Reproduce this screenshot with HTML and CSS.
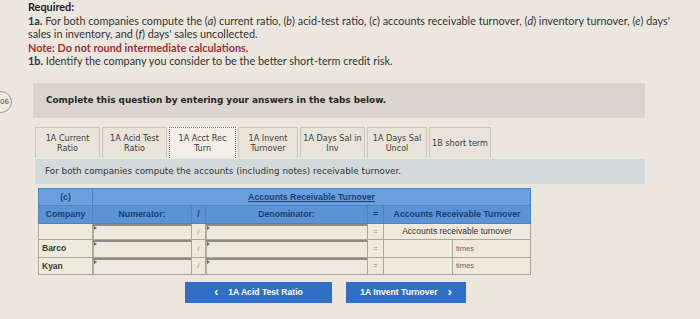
FILE: index.html
```html
<!DOCTYPE html>
<html>
<head>
<meta charset="utf-8">
<link rel="stylesheet" href="styles.css">
</head>
<body>
<div class="badge">06</div>
<div class="req">
  <div class="b">Required:</div>
  <div><b>1a.</b> For both companies compute the (<i>a</i>) current ratio, (<i>b</i>) acid-test ratio, (<i>c</i>) accounts receivable turnover, (<i>d</i>) inventory turnover, (<i>e</i>) days'</div>
  <div>sales in inventory, and (<i>f</i>) days' sales uncollected.</div>
  <div class="note">Note: Do not round intermediate calculations.</div>
  <div><b>1b.</b> Identify the company you consider to be the better short-term credit risk.</div>
</div>
<div class="main">
  <div class="bar">Complete this question by entering your answers in the tabs below.</div>
  <div class="tabs">
    <div class="tab w65">1A Current<br>Ratio</div>
    <div class="tab w65">1A Acid Test<br>Ratio</div>
    <div class="tab active w67">1A Acct Rec<br>Turn</div>
    <div class="tab w60">1A Invent<br>Turnover</div>
    <div class="tab w65">1A Days Sal in<br>Inv</div>
    <div class="tab w60">1A Days Sal<br>Uncol</div>
    <div class="tab w62">1B short term</div>
  </div>
  <div class="info">For both companies compute the accounts (including notes) receivable turnover.</div>
  <table class="grid">
    <colgroup>
      <col class="c1"><col class="c2"><col class="c3"><col class="c4"><col class="c5"><col class="c6"><col class="c7">
    </colgroup>
    <tr class="h1">
      <th>(c)</th>
      <th colspan="6"><span class="ul">Accounts Receivable Turnover</span></th>
    </tr>
    <tr class="h2">
      <th>Company</th>
      <th>Numerator:</th>
      <th>/</th>
      <th>Denominator:</th>
      <th>=</th>
      <th colspan="2">Accounts Receivable Turnover</th>
    </tr>
    <tr class="r1">
      <td></td>
      <td class="in"><span class="mk"></span></td>
      <td class="op">/</td>
      <td class="in"><span class="mk"></span></td>
      <td class="op">=</td>
      <td colspan="2" class="lbl">Accounts receivable turnover</td>
    </tr>
    <tr class="r2">
      <td class="co">Barco</td>
      <td class="in"><span class="mk"></span></td>
      <td class="op">/</td>
      <td class="in"><span class="mk"></span></td>
      <td class="op">=</td>
      <td class="val"></td>
      <td class="unit">times</td>
    </tr>
    <tr class="r3">
      <td class="co">Kyan</td>
      <td class="in"><span class="mk"></span></td>
      <td class="op">/</td>
      <td class="in"><span class="mk"></span></td>
      <td class="op">=</td>
      <td class="val"></td>
      <td class="unit">times</td>
    </tr>
  </table>
  <div class="nav">
    <div class="btn prev"><span class="chev">&lsaquo;</span>1A Acid Test Ratio</div>
    <div class="btn next">1A Invent Turnover<span class="chev r">&rsaquo;</span></div>
  </div>
</div>
</body>
</html>
```
FILE: styles.css
```css
html, body {
  margin: 0;
  padding: 0;
}
body {
  background: #ece7de;
  width: 700px;
  height: 319px;
  overflow: hidden;
  position: relative;
  font-family: Lato, "Open Sans", sans-serif;
  color: #2b2b2b;
}
.badge {
  position: absolute;
  left: -10px;
  top: 91px;
  width: 22px;
  height: 22px;
  border: 1px solid #9a968f;
  border-radius: 50%;
  background: #efebe4;
  font: 7px "DejaVu Sans", sans-serif;
  color: #555;
  display: flex;
  align-items: center;
  justify-content: flex-end;
  padding-right: 2px;
  box-sizing: border-box;
}
.req {
  padding: 0 0 0 28px;
  font-size: 10.85px;
  line-height: 13.5px;
  color: #333;
}
.req .b, .req b {
  font-weight: 700;
}
.req .b { color: #222; }
.note {
  color: #a33038;
  font-weight: 700;
}
.main {
  margin: 15px 0 0 33px;
  width: 612px;
}
.bar {
  height: 35px;
  background: #d9d5ce;
  display: flex;
  align-items: center;
  padding-left: 13px;
  font: bold 8.9px "DejaVu Sans", sans-serif;
  color: #262626;
}
.tabs {
  display: flex;
  gap: 2px;
  margin: 9px 0 0 2px;
  height: 31px;
}
.tab {
  box-sizing: border-box;
  height: 31px;
  background: #e9e4da;
  border: 1px solid #cbc5bb;
  border-bottom: none;
  display: flex;
  align-items: center;
  justify-content: center;
  text-align: center;
  font: 8.1px/10px "DejaVu Sans", sans-serif;
  color: #3a3a3a;
  white-space: nowrap;
}
.tab.active {
  background: #f3efe8;
  border: 1px dotted #7d7a75;
  border-bottom: none;
}
.w65 { width: 65px; }
.w67 { width: 67px; }
.w60 { width: 60px; }
.w62 { width: 62px; }
.info {
  margin: 1px 0 0 2px;
  width: 610px;
  height: 25px;
  background: #d3dadb;
  display: flex;
  align-items: center;
  padding-left: 10px;
  box-sizing: border-box;
  font: 8.8px "DejaVu Sans", sans-serif;
  color: #333;
}
.grid {
  margin: 4px 0 0 5px;
  border-collapse: collapse;
  table-layout: fixed;
  width: 492px;
  font-family: "Liberation Sans", Arial, sans-serif;
}
.c1 { width: 54px; }
.c2 { width: 99px; }
.c3 { width: 14px; }
.c4 { width: 162px; }
.c5 { width: 16px; }
.c6 { width: 69px; }
.c7 { width: 78px; }
.grid th {
  font-size: 8.7px;
  font-weight: 700;
  color: #1c3e72;
  padding: 0;
  border: 1px solid #4f84c4;
  white-space: nowrap;
}
.h1 th {
  height: 16px;
  background: #6a9fdf;
}
.h2 th {
  height: 17px;
  background: #5b93d6;
}
.ul {
  text-decoration: underline;
}
.grid td {
  border: 1px solid #aaa59d;
  background: #efe8dd;
  padding: 0;
  font-size: 8.5px;
  color: #333;
}
.r1 td { height: 15px; }
.r2 td { height: 17px; }
.r3 td { height: 16px; }
.co {
  padding-left: 3px !important;
  font-weight: 700;
  color: #3a3a3a !important;
}
.in {
  position: relative;
  box-shadow: inset 0 2px 0 #8e8a84, inset 1px 0 0 #b3aea6;
}
.mk {
  position: absolute;
  left: 1px;
  top: 2px;
  width: 0;
  height: 0;
  border-left: 3px solid #4a6fa8;
  border-top: 2px solid transparent;
  border-bottom: 2px solid transparent;
}
.op {
  text-align: center;
  color: #888 !important;
  font-size: 7px !important;
}
.lbl {
  text-align: center;
  font-size: 8.5px !important;
  color: #3a3a3a;
}
.unit {
  padding-left: 3px !important;
  font-size: 7.6px !important;
  color: #666 !important;
}
.nav {
  display: flex;
  gap: 14px;
  margin: 7px 0 0 152px;
}
.btn {
  height: 21px;
  background: #2f6fc6;
  color: #fff;
  font: bold 8.6px "Liberation Sans", Arial, sans-serif;
  display: flex;
  align-items: center;
  justify-content: center;
  box-sizing: border-box;
}
.prev { width: 147px; }
.next { width: 120px; }
.chev {
  font-size: 12px;
  margin-right: 10px;
  line-height: 1;
}
.chev.r {
  margin: 0 0 0 10px;
}
```
